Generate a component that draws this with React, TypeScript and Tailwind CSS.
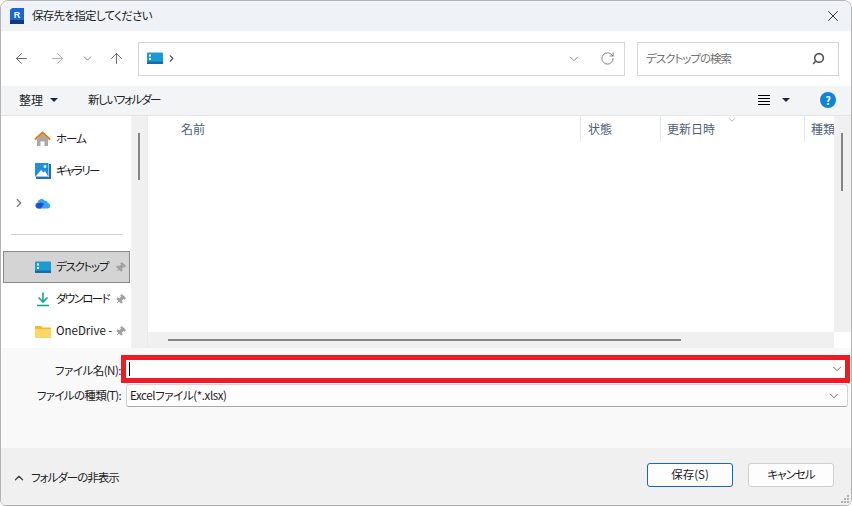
import { ArrowLeft, ArrowRight, ArrowUp, ChevronDown, ChevronRight, ChevronUp, Pin, RotateCw, Search, X } from "lucide-react";

const FONT = "[font-family:'Noto_Sans_CJK_JP','Noto_Sans',sans-serif] [font-feature-settings:'palt']";

function DesktopIcon() {
  return (
    <svg width="16" height="13" viewBox="0 0 16 13">
      <rect x="0" y="0.5" width="16" height="11.5" rx="1" fill="#1c9ad6" />
      <rect x="0" y="9.5" width="16" height="2.5" fill="#0f6fa8" />
      <rect x="2" y="2.5" width="2" height="2" fill="#fff" />
      <rect x="2" y="6" width="2" height="2" fill="#fff" />
    </svg>
  );
}

function HomeIcon() {
  return (
    <svg width="17" height="16" viewBox="0 0 17 16">
      <path d="M3 8 L8.5 3 L14 8 V15 H10.5 V10.5 H6.5 V15 H3 Z" fill="#a9a9a9" />
      <path d="M1 8.5 L8.5 1.5 L16 8.5" fill="none" stroke="#e8770e" strokeWidth="2" />
    </svg>
  );
}

function GalleryIcon() {
  return (
    <svg width="16" height="16" viewBox="0 0 16 16">
      <rect x="0" y="0" width="13.5" height="13.5" fill="#1e8fdc" />
      <rect x="14" y="1" width="2" height="15" fill="#2b6cb0" />
      <rect x="1" y="14" width="15" height="2" fill="#2b6cb0" />
      <path d="M1 13 L6 7 L8.5 9.5 L10 8 L13 13 Z" fill="#fff" />
      <circle cx="10" cy="3.5" r="1.4" fill="#fff" />
    </svg>
  );
}

function CloudIcon() {
  return (
    <svg width="16" height="11" viewBox="0 0 16 11">
      <path d="M3 10.5 A3 3 0 0 1 2.5 4.6 A4 4 0 0 1 9.5 2.5 A3.4 3.4 0 0 1 13 5 A2.8 2.8 0 0 1 13 10.5 Z" fill="#38a3ee" />
      <path d="M1 9 A3 3 0 0 1 4 5 A4 4 0 0 1 9 6 L6 10.5 H3 Z" fill="#1c4fd8" />
    </svg>
  );
}

function DownloadIcon() {
  return (
    <svg width="14" height="15" viewBox="0 0 14 15">
      <path d="M7 0.5 V10 M2.5 5.5 L7 10 L11.5 5.5" fill="none" stroke="#1aa68a" strokeWidth="1.6" />
      <path d="M1 13.5 H13" stroke="#1aa68a" strokeWidth="1.6" />
    </svg>
  );
}

function FolderIcon() {
  return (
    <svg width="16" height="13" viewBox="0 0 16 13">
      <path d="M0 1 H6 L7.5 2.5 H16 V13 H0 Z" fill="#f2b92a" />
      <rect x="0" y="4" width="16" height="9" fill="#fbd768" />
    </svg>
  );
}

function AppLogo() {
  return (
    <svg width="14" height="16" viewBox="0 0 14 16">
      <path d="M2 0 H14 V16 H0 V2 Z" fill="#1c66d4" />
      <rect x="0" y="12" width="14" height="4" fill="#123a78" />
      <text x="7" y="9.5" textAnchor="middle" fontSize="9" fontWeight="700" fill="#fff" fontFamily="Liberation Sans">R</text>
    </svg>
  );
}

function SidebarItem({ icon, label, pin, active, chevron, labelClass = "" }: { icon: React.ReactNode; label?: string; pin?: boolean; active?: boolean; chevron?: boolean; labelClass?: string }) {
  return (
    <div className={`relative flex h-[32px] w-[127px] shrink-0 items-center ml-[2px] ${active ? "bg-[#d4d4d4] border border-[#8a8a8a]" : "border border-transparent"}`}>
      {chevron ? <ChevronRight size={14} className="absolute left-[8px] top-[8px] text-[#777]" /> : null}
      <span className="ml-[30px] flex w-[17px] justify-center shrink-0">{icon}</span>
      <span className={`ml-[5px] whitespace-nowrap text-[11.5px] text-[#1a1a1a] ${labelClass}`}>{label}</span>
      {pin ? <Pin size={11} className="ml-auto mr-[3px] rotate-45 fill-[#a0a0a0] text-[#a0a0a0]" /> : null}
    </div>
  );
}

function ColumnHead({ label, className }: { label: string; className: string }) {
  return <div className={`flex h-[26px] items-start pt-[4px] pl-[7px] text-[12px] text-[#4c607a] border-r border-[#e4e8ee] ${className}`}>{label}</div>;
}

export default function App() {
  return (
    <div className={`relative flex h-[506px] w-[852px] flex-col overflow-hidden rounded-t-[8px] rounded-b-[6px] border border-[#b4b4b4] bg-white ${FONT}`}>
      {/* title bar */}
      <div className="flex h-[30px] shrink-0 items-center bg-[#eff2f7] pl-[9px] pr-[9px]">
        <AppLogo />
        <span className="ml-[8px] text-[11.5px] tracking-[-0.7px] text-[#222]">保存先を指定してください</span>
        <X size={18} strokeWidth={1.1} className="ml-auto text-[#111]" />
      </div>

      {/* address row */}
      <div className="flex h-[55px] shrink-0 items-center bg-white">
        <div className="flex w-[137px] shrink-0 items-center pl-[12px] text-[#555]">
          <ArrowLeft size={17} strokeWidth={1.2} />
          <ArrowRight size={17} strokeWidth={1.2} className="ml-[19px] text-[#a5a5a5]" />
          <ChevronDown size={13} strokeWidth={1.5} className="ml-[15px] text-[#666]" />
          <ArrowUp size={17} strokeWidth={1.2} className="ml-[14px]" />
        </div>
        <div className="flex h-[34px] w-[487px] items-center border border-[#d6d6d6] pl-[8px] pr-[9px]">
          <DesktopIcon />
          <ChevronRight size={11} strokeWidth={2.4} className="ml-[3px] text-[#555]" />
          <ChevronDown size={14} strokeWidth={1.3} className="ml-auto text-[#666]" />
          <RotateCw size={15} strokeWidth={1.3} className="ml-[19px] text-[#666]" />
        </div>
        <div className="ml-[12px] flex h-[34px] w-[202px] items-center border border-[#d6d6d6] pl-[8px] pr-[13px]">
          <span className="text-[11.5px] tracking-[-1px] text-[#707070]">デスクトップの検索</span>
          <Search size={13} strokeWidth={3} className="ml-auto -scale-x-100 text-[#555]" />
        </div>
      </div>

      {/* command bar */}
      <div className="flex h-[30px] shrink-0 items-center border-b border-[#e4e4e4] bg-[#f3f4f6] pl-[18px] pr-[15px] pb-[1px]">
        <span className="text-[12px] text-[#222]">整理</span>
        <span className="ml-[7px] h-0 w-0 border-x-[4px] border-t-[4px] border-x-transparent border-t-[#1a2a4a]" />
        <span className="ml-[30px] text-[11.5px] tracking-[-1.4px] text-[#222]">新しいフォルダー</span>
        <div className="ml-auto flex flex-col gap-[2px]">
          <span className="h-px w-[12px] bg-black" />
          <span className="h-px w-[12px] bg-black" />
          <span className="h-px w-[12px] bg-black" />
          <span className="h-px w-[12px] bg-black" />
        </div>
        <span className="ml-[12px] h-0 w-0 border-x-[4px] border-t-[4px] border-x-transparent border-t-[#1a2a4a]" />
        <span className="ml-[30px] flex h-[16px] w-[16px] items-center justify-center rounded-full bg-[#0f83d8] text-[11px] font-bold text-white">?</span>
      </div>

      {/* body */}
      <div className="flex h-[232px] shrink-0 bg-white">
        <div className="flex w-[130px] shrink-0 flex-col overflow-hidden pt-[7px]">
          <SidebarItem icon={<HomeIcon />} label="ホーム" labelClass="tracking-[-1px]" />
          <SidebarItem icon={<GalleryIcon />} label="ギャラリー" labelClass="tracking-[-1.6px]" />
          <SidebarItem icon={<CloudIcon />} chevron />
          <div className="ml-[10px] mt-[15px] mb-[16px] h-px w-[111px] shrink-0 bg-[#d0d0d0]" />
          <SidebarItem icon={<DesktopIcon />} label="デスクトップ" labelClass="tracking-[-1.3px]" pin active />
          <SidebarItem icon={<DownloadIcon />} label="ダウンロード" labelClass="tracking-[-1.6px]" pin />
          <SidebarItem icon={<FolderIcon />} label="OneDrive -" pin />
        </div>
        <div className="h-full w-[17px] shrink-0 border-r border-[#e9e9e9] bg-[#f0f0f0] pl-[7px] pt-[17px]">
          <div className="h-[47px] w-[2px] bg-[#858585]" />
        </div>
        <div className="flex min-w-0 flex-1 flex-col">
          <div className="flex min-h-0 flex-1">
            <div className="min-w-0 flex-1">
              <div className="flex overflow-hidden">
                <ColumnHead label="名前" className="w-[433px] !pl-[33px] shrink-0" />
                <ColumnHead label="状態" className="w-[80px] shrink-0" />
                <div className="relative shrink-0">
                  <ColumnHead label="更新日時" className="w-[144px] !pl-[6px]" />
                  <ChevronDown size={10} strokeWidth={1.3} className="absolute left-[66px] -top-[1px] text-[#777]" />
                </div>
                <ColumnHead label="種類" className="w-[31px] shrink-0 whitespace-nowrap border-r-0 !pl-[6px]" />
              </div>
            </div>
            <div className="w-[17px] shrink-0 bg-[#f0f0f0] pl-[7px] pt-[17px]">
              <div className="h-[58px] w-[2px] bg-[#858585]" />
            </div>
          </div>
          <div className="flex h-[16px] shrink-0">
            <div className="flex-1 bg-[#f0f0f0] pt-[7px] pl-[20px]">
              <div className="h-[2px] w-[513px] bg-[#858585]" />
            </div>
            <div className="w-[17px] bg-white" />
          </div>
        </div>
      </div>

      {/* form */}
      <div className="flex h-[100px] shrink-0 flex-col bg-[#f9f9f9] pt-[7px]">
        <div className="flex items-center">
          <span className="w-[120px] shrink-0 pt-[3px] text-right text-[11.5px] tracking-[-0.5px] text-[#222]">ファイル名(N):</span>
          <div className="flex h-[28px] w-[729px] items-center border-[5px] border-[#ed1c24] bg-white pl-[3px] pr-[1px]">
            <span className="h-[14px] w-px bg-black" />
            <ChevronDown size={14} strokeWidth={1.3} className="ml-auto text-[#444]" />
          </div>
        </div>
        <div className="mt-[1px] flex items-center">
          <span className="w-[120px] shrink-0 text-right text-[11.5px] tracking-[-0.7px] text-[#222]">ファイルの種類(T):</span>
          <div className="ml-[5px] flex h-[23px] w-[722px] items-center rounded-[3px] border border-[#d4d4d4] border-b-[#a8a8a8] bg-[#fdfdfd] pl-[3px] pr-[6px]">
            <span className="text-[11.5px] tracking-[-0.4px] text-[#222]">Excelファイル(*.xlsx)</span>
            <ChevronDown size={14} strokeWidth={1.3} className="ml-auto text-[#444]" />
          </div>
        </div>
      </div>

      {/* footer */}
      <div className="flex min-h-0 flex-1 items-center bg-[#f0f0f0] pl-[11px] pr-[17px]">
        <ChevronUp size={14} strokeWidth={2.4} className="mt-[2px] text-[#444]" />
        <span className="ml-[5px] mt-[2px] text-[11.5px] tracking-[-1px] text-[#222]">フォルダーの非表示</span>
        <button className="-mt-[4px] ml-auto h-[24px] w-[86px] rounded-[3px] border border-[#0f6cbd] bg-[#fdfdfd] text-[11.5px] text-[#222]">保存(S)</button>
        <button className="-mt-[4px] ml-[15px] h-[24px] w-[86px] rounded-[3px] border border-[#d0d0d0] bg-[#fdfdfd] text-[11.5px] tracking-[-1px] text-[#222]">キャンセル</button>
      </div>

      {/* resize grip */}
      <div className="absolute bottom-[2px] right-[2px] grid grid-cols-3 gap-[1px]">
        <span /><span /><span className="h-[2px] w-[2px] bg-[#b0b0b0]" />
        <span /><span className="h-[2px] w-[2px] bg-[#b0b0b0]" /><span className="h-[2px] w-[2px] bg-[#b0b0b0]" />
        <span className="h-[2px] w-[2px] bg-[#b0b0b0]" /><span className="h-[2px] w-[2px] bg-[#b0b0b0]" /><span className="h-[2px] w-[2px] bg-[#b0b0b0]" />
      </div>
    </div>
  );
}
